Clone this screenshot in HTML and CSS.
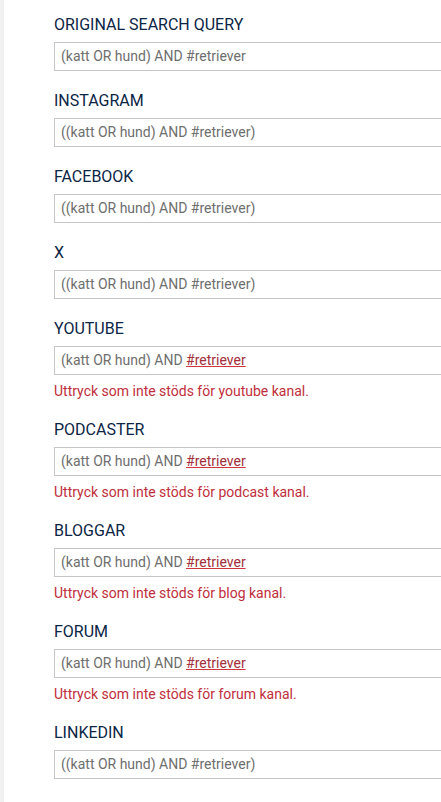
FILE: index.html
```html
<!DOCTYPE html>
<html>
  <head>
    <link rel="stylesheet" href="styles.css">
  </head>
  <body>
    <div class="page">
      <div class="side-strip"></div>
      <div class="query-list">
        <div class="query-item">
          <label class="query-label">ORIGINAL SEARCH QUERY</label>
          <div class="query-input">(katt OR hund) AND #retriever</div>
        </div>
        <div class="query-item">
          <label class="query-label">INSTAGRAM</label>
          <div class="query-input">((katt OR hund) AND #retriever)</div>
        </div>
        <div class="query-item">
          <label class="query-label">FACEBOOK</label>
          <div class="query-input">((katt OR hund) AND #retriever)</div>
        </div>
        <div class="query-item">
          <label class="query-label">X</label>
          <div class="query-input">((katt OR hund) AND #retriever)</div>
        </div>
        <div class="query-item">
          <label class="query-label">YOUTUBE</label>
          <div class="query-input">(katt OR hund) AND <span class="bad-term">#retriever</span></div>
          <div class="query-error">Uttryck som inte stöds för youtube kanal.</div>
        </div>
        <div class="query-item">
          <label class="query-label">PODCASTER</label>
          <div class="query-input">(katt OR hund) AND <span class="bad-term">#retriever</span></div>
          <div class="query-error">Uttryck som inte stöds för podcast kanal.</div>
        </div>
        <div class="query-item">
          <label class="query-label">BLOGGAR</label>
          <div class="query-input">(katt OR hund) AND <span class="bad-term">#retriever</span></div>
          <div class="query-error">Uttryck som inte stöds för blog kanal.</div>
        </div>
        <div class="query-item">
          <label class="query-label">FORUM</label>
          <div class="query-input">(katt OR hund) AND <span class="bad-term">#retriever</span></div>
          <div class="query-error">Uttryck som inte stöds för forum kanal.</div>
        </div>
        <div class="query-item">
          <label class="query-label">LINKEDIN</label>
          <div class="query-input">((katt OR hund) AND #retriever)</div>
        </div>
      </div>
    </div>
  </body>
</html>
```

FILE: styles.css
```css
* {
  box-sizing: border-box;
  font-family: Roboto, "Liberation Sans", sans-serif;
}

html, body {
  margin: 0;
  padding: 0;
  background: #ffffff;
  overflow: hidden;
}

.page {
  display: flex;
  min-height: 802px;
}

.side-strip {
  width: 4px;
  flex-shrink: 0;
  background: #f1f1f1;
}

.query-list {
  padding: 15px 0 0 50px;
  display: flex;
  flex-direction: column;
  gap: 20px;
}

.query-item {
  display: flex;
  flex-direction: column;
}

.query-label {
  font-size: 16px;
  line-height: 19px;
  color: #0b2545;
  margin-bottom: 8px;
}

/* the field runs on past the right edge of the panel */
.query-input {
  width: 420px;
  height: 29px;
  border: 1px solid #c6c6c6;
  padding: 0 6px;
  font-size: 14px;
  line-height: 27px;
  color: #6e6e6e;
  white-space: nowrap;
}

.bad-term {
  color: #a3303a;
  text-decoration: underline;
  text-decoration-color: #d0343f;
}

.query-error {
  margin-top: 7px;
  font-size: 14px;
  line-height: 18px;
  color: #bf2e3b;
}
```
